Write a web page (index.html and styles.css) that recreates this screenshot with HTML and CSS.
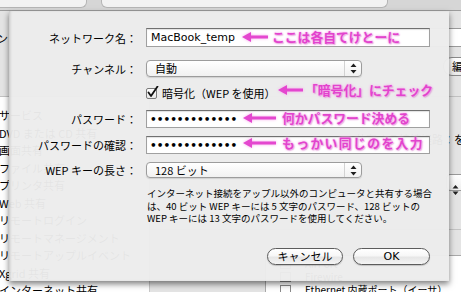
FILE: index.html
```html
<!DOCTYPE html>
<html lang="ja">
<head>
<meta charset="utf-8">
<link rel="stylesheet" href="styles.css">
</head>
<body>
<div class="desk">
  <div class="bgwin">
    <div class="bg-top">
      <div class="tab tab1"></div>
      <div class="tab tab2"></div>
    </div>
    <div class="bg-head">
      <div class="bg-label"><span>コンピュータ名：コン</span></div>
      <div></div>
      <div class="bg-right">
        <div class="bg-field"></div>
        <div class="bg-btn">編集...</div>
      </div>
    </div>
    <div class="bg-body">
      <div class="svc-list">
        <div class="svc">サービス</div>
        <div class="svc">DVD または CD 共有</div>
        <div class="svc">画面共有</div>
        <div class="svc">ファイル共有</div>
        <div class="svc">プリンタ共有</div>
        <div class="svc">Web 共有</div>
        <div class="svc">リモートログイン</div>
        <div class="svc">リモートマネージメント</div>
        <div class="svc">リモートアップルイベント</div>
        <div class="svc">Xgrid 共有</div>
        <div class="svc">インターネット共有</div>
      </div>
      <div class="pane">
        <div class="pane-label"><span>共有する接続経路：を共有</span></div>
        <div class="pane-popup">
          <svg width="7" height="12" viewBox="0 0 7 12"><path d="M3.5 1 L6.5 4.5 H0.5 Z M3.5 11 L6.5 7.5 H0.5 Z" fill="#222"/></svg>
        </div>
        <div class="pane-line"></div>
        <div class="ports">
          <div class="port"><span class="pcb"></span><span>AirPort</span></div>
          <div class="port"><span class="pcb"></span><span>Firewire</span></div>
          <div class="port"><span class="pcb"></span><span>Ethernet 内蔵ポート（イーサ）</span></div>
        </div>
      </div>
    </div>
  </div>

  <div class="sheet">
    <div class="row r1">
      <div class="lbl">ネットワーク名：</div>
      <div class="field name">MacBook_temp</div>
    </div>
    <div class="row r2">
      <div class="lbl">チャンネル：</div>
      <div class="popup"><span class="val">自動</span><span class="arrows"><svg width="7" height="11" viewBox="0 0 7 11"><path d="M3.5 0.5 L6.5 4 H0.5 Z M3.5 10.5 L6.5 7 H0.5 Z" fill="#1e1e1e"/></svg></span></div>
    </div>
    <div class="row r3">
      <div></div>
      <div class="check">
        <span class="cb"><svg width="13" height="13" viewBox="0 0 13 13"><path d="M2.5 6.5 L5 10 L11.5 0.5" fill="none" stroke="#111" stroke-width="1.8" stroke-linecap="round" stroke-linejoin="round"/></svg></span>
        <span>暗号化（WEP を使用）</span>
      </div>
    </div>
    <div class="row r4">
      <div class="lbl">パスワード：</div>
      <div class="field pw">•••••••••••••</div>
    </div>
    <div class="row r5">
      <div class="lbl">パスワードの確認：</div>
      <div class="field pw">•••••••••••••</div>
    </div>
    <div class="row r6">
      <div class="lbl">WEP キーの長さ：</div>
      <div class="popup"><span class="val">128 ビット</span><span class="arrows"><svg width="7" height="11" viewBox="0 0 7 11"><path d="M3.5 0.5 L6.5 4 H0.5 Z M3.5 10.5 L6.5 7 H0.5 Z" fill="#1e1e1e"/></svg></span></div>
    </div>
    <div class="row r7">
      <div></div>
      <p class="note">インターネット接続をアップル以外のコンピュータと共有する場合<br>は、40 ビット WEP キーには 5 文字のパスワード、128 ビットの<br>WEP キーには 13 文字のパスワードを使用してください。</p>
    </div>
    <div class="buttons">
      <div class="btn">キャンセル</div>
      <div class="btn ok">OK</div>
    </div>
  </div>

  <div class="anno a1">
    <svg width="26" height="12" viewBox="0 0 26 12"><path d="M0 6 L9 1 L9 11 Z" /><rect x="8" y="4.5" width="18" height="3"/></svg>
    <span>ここは各自てけとーに</span>
  </div>
  <div class="anno a2">
    <svg width="25" height="12" viewBox="0 0 25 12"><path d="M0 6 L9 1 L9 11 Z" /><rect x="8" y="4.5" width="17" height="3"/></svg>
    <span>「暗号化」にチェック</span>
  </div>
  <div class="anno a3">
    <svg width="33" height="12" viewBox="0 0 33 12"><path d="M0 6 L9 1 L9 11 Z" /><rect x="8" y="4.5" width="25" height="3"/></svg>
    <span>何かパスワード決める</span>
  </div>
  <div class="anno a4">
    <svg width="33" height="12" viewBox="0 0 33 12"><path d="M0 6 L9 1 L9 11 Z" /><rect x="8" y="4.5" width="25" height="3"/></svg>
    <span>もっかい同じのを入力</span>
  </div>
</div>
</body>
</html>
```

FILE: styles.css
```css
* { box-sizing: border-box; }
html, body { margin: 0; padding: 0; }
body {
  width: 461px;
  height: 292px;
  overflow: hidden;
  font-family: "Noto Sans CJK JP", "DejaVu Sans", sans-serif;
  color: #000;
}
.desk {
  position: relative;
  width: 461px;
  height: 292px;
  overflow: hidden;
  background: #e4e4e4;
}

/* ---------- background window ---------- */
.bgwin { display: flex; flex-direction: column; height: 100%; }
.bg-top {
  flex: none;
  height: 11px;
  display: flex;
  gap: 14px;
  align-items: flex-start;
  border-bottom: 1px solid #9c9c9c;
  background: #d6d6d6;
}
.tab {
  height: 8px;
  background: #f2f2f2;
  border: 1px solid #b5b5b5;
  border-top: none;
  border-radius: 0 0 6px 6px;
}
.tab1 { width: 92px; margin-left: -5px; }
.tab2 { width: 287px; }

.bg-head {
  flex: none;
  height: 86px;
  display: grid;
  grid-template-columns: 8px 1fr 40px;
  border-bottom: 1px solid #c2c2c2;
}
.bg-label {
  display: flex;
  justify-content: flex-end;
  margin-top: 20px;
  font-size: 11px;
  line-height: 14px;
  white-space: nowrap;
}
.bg-right { display: flex; flex-direction: column; }
.bg-field {
  margin-top: 17px;
  height: 19px;
  margin-right: -20px;
  background: #fff;
  border: 1px solid #9a9a9a;
}
.bg-btn {
  margin-top: 10px;
  margin-left: 22px;
  height: 19px;
  margin-right: -20px;
  border: 1px solid #8a8a8a;
  border-radius: 9px 0 0 9px;
  background: linear-gradient(#fff, #ececec);
  font-size: 11px;
  line-height: 17px;
  padding-left: 8px;
  white-space: nowrap;
}

.bg-body {
  flex: 1;
  min-height: 0;
  overflow: hidden;
  display: grid;
  grid-template-columns: 150px 1fr;
}
.svc-list {
  background: #fff;
  padding-top: 10px;
  border-right: 1px solid #c8c8c8;
}
.svc {
  height: 17.5px;
  line-height: 17.5px;
  font-size: 11px;
  white-space: nowrap;
  margin-left: -1px;
}
.pane { display: flex; flex-direction: column; }
.pane-label {
  flex: none;
  margin-top: 36px;
  display: flex;
  justify-content: flex-end;
  margin-right: -1px;
  font-size: 11px;
  line-height: 13px;
  white-space: nowrap;
}
.pane-popup {
  flex: none;
  margin-top: 28px;
  margin-left: 296px;
  width: 40px;
  height: 17px;
  border: 1px solid #9a9a9a;
  border-radius: 4px 0 0 4px;
  background: linear-gradient(#fff, #efefef);
  padding: 2px 0 0 5px;
}
.pane-line {
  flex: none;
  margin-top: 38px;
  height: 1px;
  background: #c4c4c4;
}
.ports {
  flex: none;
  margin-top: 25px;
  margin-left: 115px;
  background: #fff;
  border-top: 1px solid #a9a9a9;
  border-left: 1px solid #a9a9a9;
  padding-left: 14px;
  padding-top: 1px;
}
.port {
  height: 13px;
  display: flex;
  align-items: center;
  gap: 14px;
  font-size: 10px;
  white-space: nowrap;
}
.pcb {
  width: 11px;
  height: 10px;
  border: 1px solid #8a8a8a;
  background: #fff;
}

/* ---------- sheet ---------- */
.sheet {
  position: absolute;
  left: 9px;
  top: 11px;
  width: 440px;
  height: 270px;
  background: rgba(236, 236, 236, 0.965);
  box-shadow: 0 3px 6px rgba(0, 0, 0, 0.5), inset 2px 0 3px -1px rgba(0, 0, 0, 0.18);
  padding: 17px 19px 0 0;
  display: flex;
  flex-direction: column;
}
.row {
  display: grid;
  grid-template-columns: 126px 284px;
  column-gap: 11px;
  align-items: center;
}
.lbl {
  text-align: right;
  font-size: 11px;
  line-height: 14px;
  white-space: nowrap;
  margin-right: -2px;
}
.r2 { margin-top: 13px; }
.r3 { margin-top: 9px; height: 12px; }
.r4 { margin-top: 12px; }
.r5 { margin-top: 8px; }
.r6 { margin-top: 8px; }
.r7 { margin-top: 9px; }

.field {
  height: 19px;
  background: #fff;
  border: 1px solid #a0a0a0;
  border-top-color: #707070;
  box-shadow: inset 0 1px 1px rgba(0, 0, 0, 0.12);
  padding-left: 4px;
  white-space: nowrap;
}
.name {
  font-family: "DejaVu Sans", sans-serif;
  font-size: 11px;
  line-height: 17px;
}
.pw {
  height: 18px;
  font-family: "DejaVu Sans", sans-serif;
  font-size: 10.5px;
  line-height: 16px;
  font-weight: bold;
  padding-left: 3px;
}
.popup {
  width: 216px;
  height: 17px;
  border: 1px solid #9c9c9c;
  border-radius: 4px;
  background: linear-gradient(#ffffff, #f1f1f1);
  box-shadow: 0 1px 1px rgba(0, 0, 0, 0.12);
  display: flex;
  align-items: center;
  font-size: 11px;
  line-height: 15px;
  padding-left: 8px;
}
.popup .val { flex: 1; white-space: nowrap; }
.popup .arrows {
  width: 17px;
  align-self: stretch;
  border-left: 1px solid #d2d2d2;
  display: flex;
  align-items: center;
  justify-content: center;
}
.r6 .popup { height: 16px; }

.check {
  display: flex;
  align-items: center;
  gap: 5px;
  font-size: 11px;
  line-height: 14px;
  white-space: nowrap;
}
.cb {
  width: 11px;
  height: 11px;
  border: 1px solid #7a7a7a;
  border-radius: 2px;
  background: linear-gradient(#fff, #e9e9e9);
  display: flex;
  align-items: flex-end;
  overflow: visible;
}
.cb svg { margin-left: -1px; margin-bottom: -1px; flex: none; }

.note {
  margin: 0 0 0 1px;
  font-size: 9.5px;
  line-height: 12.5px;
  white-space: nowrap;
}

.buttons {
  margin-top: 23px;
  display: flex;
  justify-content: flex-end;
  gap: 10px;
}
.btn {
  width: 76px;
  height: 17px;
  border: 1px solid #5c5c5c;
  border-radius: 9px;
  background: linear-gradient(#ffffff 0%, #f7f7f7 45%, #e6e6e6 55%, #f4f4f4 100%);
  box-shadow: 0 1px 1px rgba(0, 0, 0, 0.18);
  display: flex;
  align-items: center;
  justify-content: center;
  font-size: 11px;
  line-height: 15px;
}
.btn.ok { width: 77px; font-family: "DejaVu Sans", sans-serif; font-size: 11px; }

/* ---------- pink annotations ---------- */
.anno {
  position: absolute;
  display: flex;
  align-items: center;
  color: #e244cd;
  font-weight: 700;
  font-size: 12.8px;
  line-height: 14px;
  white-space: nowrap;
  text-shadow: 0 0 2px #f8b4ef, 0 0 3px #f8b4ef, 1px 1px 1px rgba(170, 30, 150, 0.35);
}
.anno svg {
  fill: #e447cf;
  filter: drop-shadow(0 0 1.5px #f6a8ec);
  flex: none;
}
.a1 { left: 242px; top: 30px; gap: 4px; }
.a2 { left: 278px; top: 83px; gap: 2px; }
.a3 { left: 243px; top: 111px; gap: 6px; }
.a4 { left: 243px; top: 136px; gap: 6px; }
.a4 span { letter-spacing: 1.4px; }
```
